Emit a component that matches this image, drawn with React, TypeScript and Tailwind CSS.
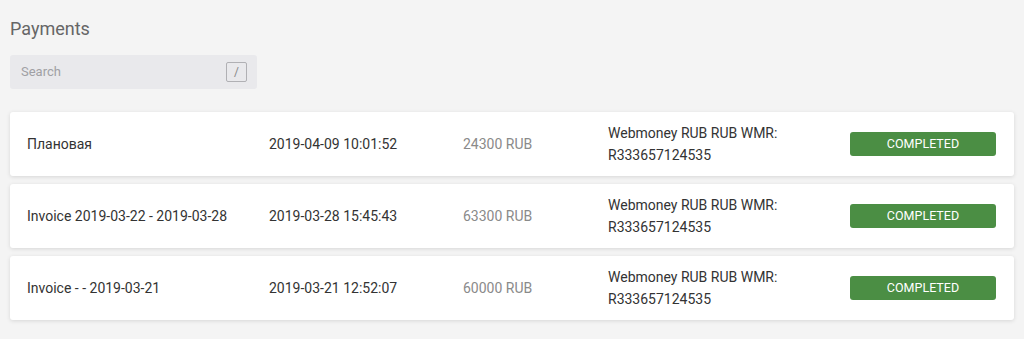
import React from 'react';

interface Payment {
  title: string;
  date: string;
  amount: string;
  method: string;
  account: string;
}

const payments: Payment[] = [
  { title: 'Плановая', date: '2019-04-09 10:01:52', amount: '24300 RUB', method: 'Webmoney RUB RUB WMR:', account: 'R333657124535' },
  { title: 'Invoice 2019-03-22 - 2019-03-28', date: '2019-03-28 15:45:43', amount: '63300 RUB', method: 'Webmoney RUB RUB WMR:', account: 'R333657124535' },
  { title: 'Invoice - - 2019-03-21', date: '2019-03-21 12:52:07', amount: '60000 RUB', method: 'Webmoney RUB RUB WMR:', account: 'R333657124535' },
];

const PaymentRow: React.FC<{ payment: Payment }> = ({ payment }) => (
  <div className="flex items-center h-[64px] px-[17px] bg-white rounded-[3px] shadow-[0_1px_4px_rgba(0,0,0,0.12)]">
    <div className="w-[242px] text-[14px] text-[#333]">{payment.title}</div>
    <div className="w-[194px] text-[14px] text-[#333]">{payment.date}</div>
    <div className="w-[145px] text-[14px] text-[#8a8a8a]">{payment.amount}</div>
    <div className="w-[242px] text-[14px] leading-[22px] text-[#333]">
      <div>{payment.method}</div>
      <div>{payment.account}</div>
    </div>
    <div className="w-[146px] h-[24px] flex items-center justify-center rounded-[3px] bg-[#4b8e44] text-white text-[12.5px]">
      COMPLETED
    </div>
  </div>
);

export default function App() {
  return (
    <div className="w-[1024px] h-[339px] bg-[#f4f4f4] px-[10px] pt-[17px] font-['Roboto',sans-serif]">
      {/* Заголовок */}
      <h1 className="text-[18px] leading-[24px] text-[#666]">Payments</h1>

      {/* Поиск */}
      <div className="mt-[14px] w-[247px] h-[34px] bg-[#e9e9ec] rounded-[3px] flex items-center justify-between pl-[11px] pr-[10px]">
        <span className="text-[13px] text-[#a0a0a4]">Search</span>
        <span className="w-[21px] h-[20px] border border-[#b0b0b4] rounded-[2px] flex items-center justify-center text-[12px] text-[#888]">/</span>
      </div>

      {/* Список платежей */}
      <div className="mt-[23px] flex flex-col gap-[8px]">
        {payments.map((p) => (
          <PaymentRow key={p.date} payment={p} />
        ))}
      </div>
    </div>
  );
}
